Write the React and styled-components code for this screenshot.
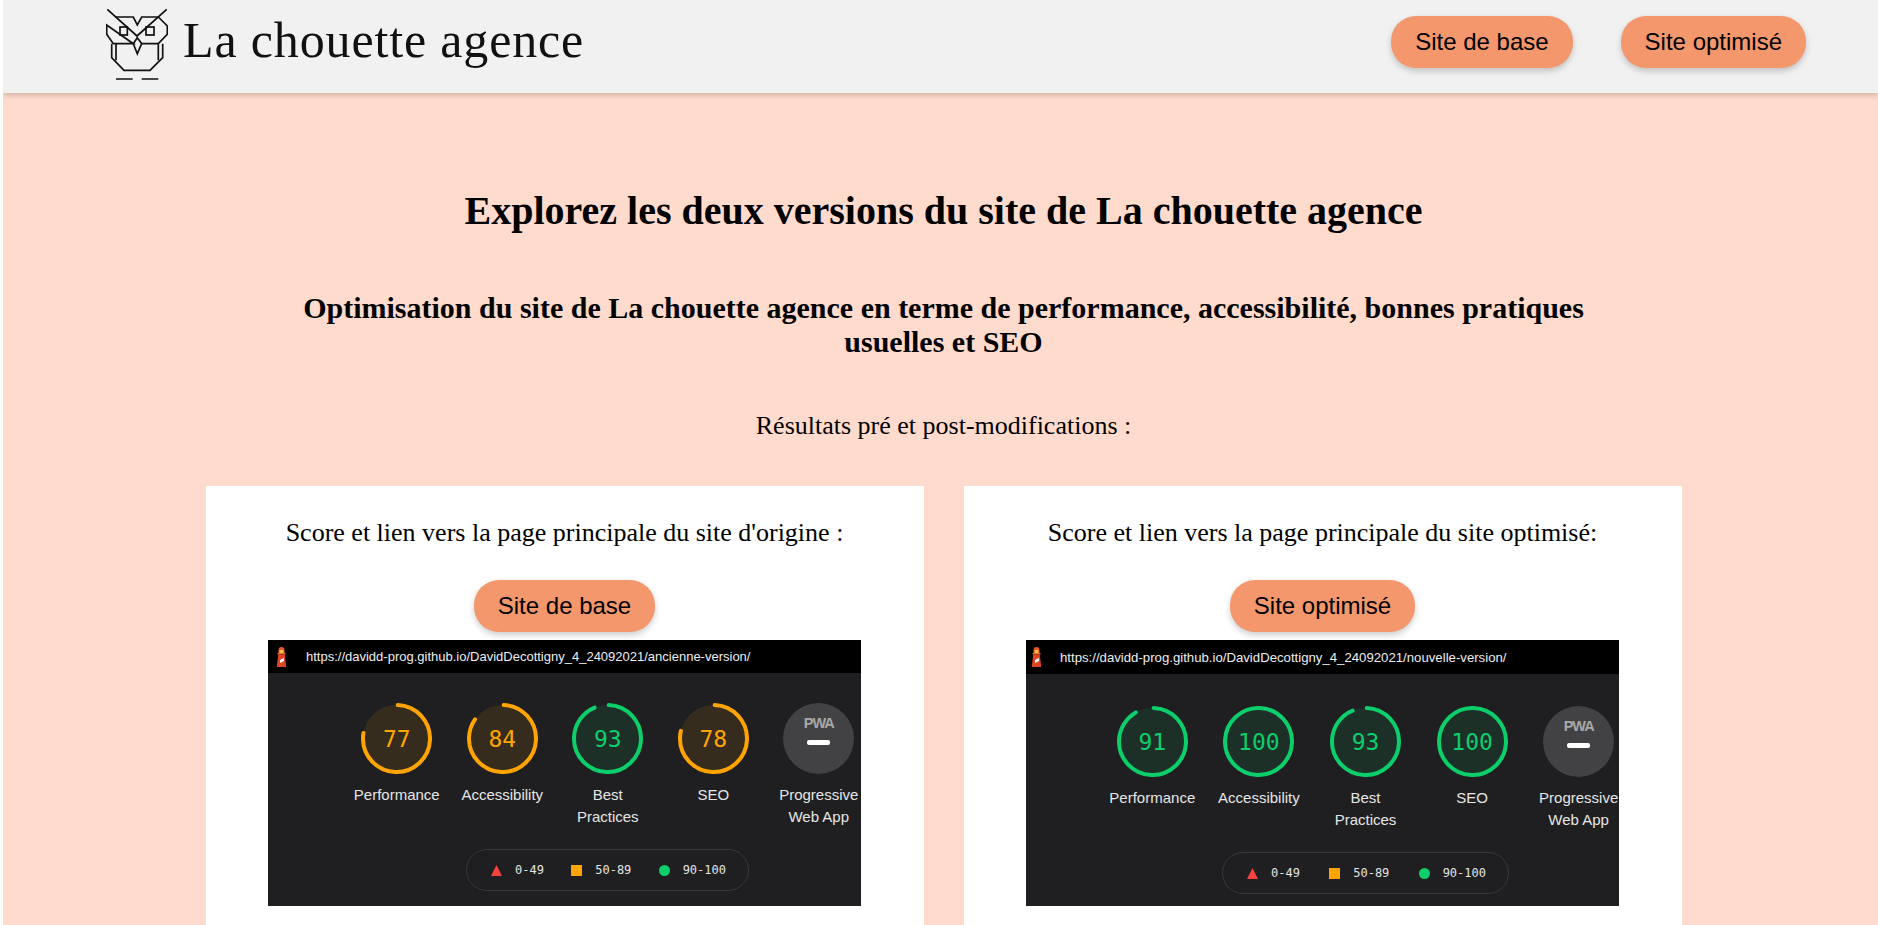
import styled, { createGlobalStyle } from "styled-components";

const GlobalStyle = createGlobalStyle`
  html, body {
    margin: 0;
    padding: 0;
    background-color: #fff;
  }
  body {
    padding-left: 3px;
    font-family: "Liberation Serif", "Times New Roman", serif;
    color: #000;
  }
`;

const Page = styled.div`
  height: 925px;
  overflow: hidden;
  background-color: #ffdbcd;
`;

const Header = styled.header`
  position: relative;
  height: 93px;
  padding: 0 72px 0 103px;
  display: flex;
  align-items: center;
  justify-content: space-between;
  background-color: #f1f1f1;
  box-shadow: 0 2px 6px rgba(0, 0, 0, 0.2);
  box-sizing: border-box;
`;

const Logo = styled.a`
  display: flex;
  align-items: center;
  gap: 15px;
  color: #111;
`;

const LogoName = styled.span`
  margin-bottom: 13px;
  font-family: "Liberation Serif", serif;
  font-size: 50px;
  letter-spacing: 0.85px;
  white-space: nowrap;
`;

const Nav = styled.nav`
  display: flex;
  gap: 48px;
  margin-bottom: 9px;
`;

const PillButton = styled.a`
  display: block;
  padding: 12px 24px;
  border-radius: 25px;
  background-color: #f4976c;
  box-shadow: 0 3px 6px rgba(0, 0, 0, 0.2);
  font-family: "Liberation Sans", Arial, sans-serif;
  font-size: 24px;
  color: #000;
  white-space: nowrap;
`;

const Main = styled.main`
  padding: 94px 0 0 6px;
  text-align: center;
`;

const Title = styled.h1`
  margin: 0;
  font-size: 40px;
`;

const Subtitle = styled.h2`
  width: 1340px;
  margin: 57px auto 0;
  font-size: 30px;
`;

const Intro = styled.p`
  margin: 52px 0 0;
  font-size: 26px;
`;

const Cards = styled.section`
  display: flex;
  justify-content: center;
  gap: 40px;
  margin-top: 45px;
`;

const Card = styled.article`
  width: 718px;
  height: 600px;
  padding-top: 32px;
  display: flex;
  flex-direction: column;
  align-items: center;
  background-color: #fff;
  box-sizing: border-box;
`;

const CardText = styled.p`
  margin: 0 0 32px;
  font-size: 26px;
`;

const Report = styled.div`
  width: 593px;
  height: 266px;
  margin-top: 8px;
  overflow: hidden;
  background-color: #1f1f21;
  font-family: "Liberation Sans", Arial, sans-serif;
`;

const ReportBar = styled.div`
  height: ${(p) => p.$barHeight}px;
  padding-left: ${(p) => p.$barLeft}px;
  display: flex;
  align-items: center;
  gap: ${(p) => p.$barGap}px;
  background-color: #000;
  box-sizing: border-box;
`;

const ReportUrl = styled.span`
  font-size: ${(p) => p.$size}px;
  color: #eee;
  white-space: nowrap;
`;

const GaugeRow = styled.div`
  display: grid;
  grid-template-columns: repeat(5, ${(p) => p.$column}px);
  margin-top: ${(p) => p.$top}px;
  padding-left: ${(p) => p.$left}px;
`;

const GaugeCell = styled.div`
  display: flex;
  flex-direction: column;
  align-items: center;
`;

const GaugeDial = styled.div`
  position: relative;
  width: 71px;
  height: 71px;
`;

const GaugeScore = styled.span`
  position: absolute;
  inset: 0;
  display: flex;
  align-items: center;
  justify-content: center;
  font-family: "DejaVu Sans Mono", monospace;
  font-size: 23px;
  color: ${(p) => p.$color};
`;

const GaugeLabel = styled.div`
  margin-top: 10px;
  width: 100px;
  font-size: 15px;
  line-height: 22px;
  color: #e6e6e6;
  text-align: center;
  white-space: nowrap;
`;

const PwaMark = styled.span`
  position: absolute;
  top: 12px;
  left: 0;
  right: 0;
  font-size: 14.5px;
  font-weight: bold;
  letter-spacing: -1px;
  color: #a8a8a8;
  text-align: center;
`;

const PwaDash = styled.span`
  position: absolute;
  top: 37px;
  left: 24px;
  width: 23px;
  height: 4.5px;
  border-radius: 2px;
  background-color: #fff;
`;

const Legend = styled.div`
  width: ${(p) => p.$width}px;
  height: 42px;
  margin: ${(p) => p.$top}px 0 0 ${(p) => p.$left}px;
  padding: 0 22px 0 24px;
  display: flex;
  align-items: center;
  justify-content: space-between;
  border: 1px solid #38383a;
  border-radius: 21px;
  box-sizing: border-box;
`;

const LegendItem = styled.span`
  display: flex;
  align-items: center;
  gap: 13px;
  font-family: "DejaVu Sans Mono", monospace;
  font-size: 12px;
  color: #e4e4e4;
`;

const ORANGE = "#ffa400";
const GREEN = "#0cce6b";

function scoreColor(score) {
  return score >= 90 ? GREEN : ORANGE;
}

function LighthouseIcon() {
  return (
    <svg width="11" height="20" viewBox="0 0 11 20">
      <path d="M5.5 0 A3 3 0 0 1 8.5 3 V6 H2.5 V3 A3 3 0 0 1 5.5 0 Z" fill="#e8542d" />
      <rect x="3.5" y="3" width="4" height="3" fill="#fbbf3a" />
      <rect x="1.5" y="6" width="8" height="1.5" fill="#ef6b3c" />
      <path d="M2.2 7.5 H8.8 L10.2 20 H0.8 Z" fill="#df4423" />
      <path d="M4 13 L8 11 V14 L4 16 Z" fill="#fff" />
    </svg>
  );
}

function OwlLogo() {
  return (
    <svg width="62" height="82" viewBox="0 0 62 82" fill="none" stroke="#111" strokeWidth="1.7">
      <path d="M1.3 3.3 L31 30 L60.7 3.3" />
      <path d="M9 11 H27.3 L31.3 19 L35.7 11 H52.3 L61.3 20 V28.3 L52.3 37.7 H35.7 M27.3 37.7 H7.3 L0.7 28.3 V19 Z" />
      <rect x="14" y="21" width="7.3" height="8" />
      <rect x="40" y="21" width="8" height="8" />
      <path d="M31.3 31.7 L27.3 37.7 L31.3 47.7 L35.7 37.7 Z" />
      <path d="M5.7 37.7 V51.7 L18 64.3 H44 L56.7 51.7 V37.7" />
      <path d="M10 37.7 V54.3 M52.3 37.7 V54.3" />
      <path d="M10 73 H26.7 M35.7 73 H52.3" />
    </svg>
  );
}

function Gauge({ score, label }) {
  const radius = 33.5;
  const length = 2 * Math.PI * radius;
  const color = scoreColor(score);
  return (
    <GaugeCell>
      <GaugeDial>
        <svg width="71" height="71" viewBox="0 0 71 71">
          <circle cx="35.5" cy="35.5" r={radius} fill={color} fillOpacity="0.1" />
          <circle
            cx="35.5"
            cy="35.5"
            r={radius}
            fill="none"
            stroke={color}
            strokeWidth="4"
            strokeLinecap="round"
            strokeDasharray={`${(length * score) / 100} ${length}`}
            transform="rotate(-88 35.5 35.5)"
          />
        </svg>
        <GaugeScore $color={color}>{score}</GaugeScore>
      </GaugeDial>
      <GaugeLabel>{label}</GaugeLabel>
    </GaugeCell>
  );
}

function PwaGauge() {
  return (
    <GaugeCell>
      <GaugeDial>
        <svg width="71" height="71" viewBox="0 0 71 71">
          <circle cx="35.5" cy="35.5" r="35.5" fill="#424244" />
        </svg>
        <PwaMark>PWA</PwaMark>
        <PwaDash />
      </GaugeDial>
      <GaugeLabel>
        Progressive
        <br />
        Web App
      </GaugeLabel>
    </GaugeCell>
  );
}

function ReportShot({ url, scores, layout }) {
  return (
    <Report>
      <ReportBar $barHeight={layout.barHeight} $barLeft={layout.barLeft} $barGap={layout.barGap}>
        <LighthouseIcon />
        <ReportUrl $size={layout.urlSize}>{url}</ReportUrl>
      </ReportBar>
      <GaugeRow $column={layout.column} $left={layout.left} $top={layout.gaugeTop}>
        <Gauge score={scores[0]} label="Performance" />
        <Gauge score={scores[1]} label="Accessibility" />
        <Gauge
          score={scores[2]}
          label={
            <>
              Best
              <br />
              Practices
            </>
          }
        />
        <Gauge score={scores[3]} label="SEO" />
        <PwaGauge />
      </GaugeRow>
      <Legend $width={layout.legendWidth} $left={layout.legendLeft} $top={layout.legendTop}>
        <LegendItem>
          <svg width="11" height="11" viewBox="0 0 11 11">
            <path d="M5.5 0 L11 11 H0 Z" fill="#f4433c" />
          </svg>
          0-49
        </LegendItem>
        <LegendItem>
          <svg width="11" height="11" viewBox="0 0 11 11">
            <rect width="11" height="11" fill={ORANGE} />
          </svg>
          50-89
        </LegendItem>
        <LegendItem>
          <svg width="11" height="11" viewBox="0 0 11 11">
            <circle cx="5.5" cy="5.5" r="5.5" fill={GREEN} />
          </svg>
          90-100
        </LegendItem>
      </Legend>
    </Report>
  );
}

const OLD_LAYOUT = { barHeight: 33, barLeft: 8, barGap: 19, urlSize: 13, gaugeTop: 30, column: 105.5, left: 76, legendWidth: 283, legendLeft: 198, legendTop: 21 };
const NEW_LAYOUT = { barHeight: 34, barLeft: 5, barGap: 18, urlSize: 13.2, gaugeTop: 32, column: 106.6, left: 73, legendWidth: 287, legendLeft: 196, legendTop: 21 };

export default function App() {
  return (
    <Page>
      <GlobalStyle />
      <Header>
        <Logo>
          <OwlLogo />
          <LogoName>La chouette agence</LogoName>
        </Logo>
        <Nav>
          <PillButton>Site de base</PillButton>
          <PillButton>Site optimisé</PillButton>
        </Nav>
      </Header>
      <Main>
        <Title>Explorez les deux versions du site de La chouette agence</Title>
        <Subtitle>
          Optimisation du site de La chouette agence en terme de performance, accessibilité, bonnes pratiques usuelles et SEO
        </Subtitle>
        <Intro>Résultats pré et post-modifications :</Intro>
        <Cards>
          <Card>
            <CardText>Score et lien vers la page principale du site d'origine :</CardText>
            <PillButton>Site de base</PillButton>
            <ReportShot
              url="https://davidd-prog.github.io/DavidDecottigny_4_24092021/ancienne-version/"
              scores={[77, 84, 93, 78]}
              layout={OLD_LAYOUT}
            />
          </Card>
          <Card>
            <CardText>Score et lien vers la page principale du site optimisé:</CardText>
            <PillButton>Site optimisé</PillButton>
            <ReportShot
              url="https://davidd-prog.github.io/DavidDecottigny_4_24092021/nouvelle-version/"
              scores={[91, 100, 93, 100]}
              layout={NEW_LAYOUT}
            />
          </Card>
        </Cards>
      </Main>
    </Page>
  );
}
